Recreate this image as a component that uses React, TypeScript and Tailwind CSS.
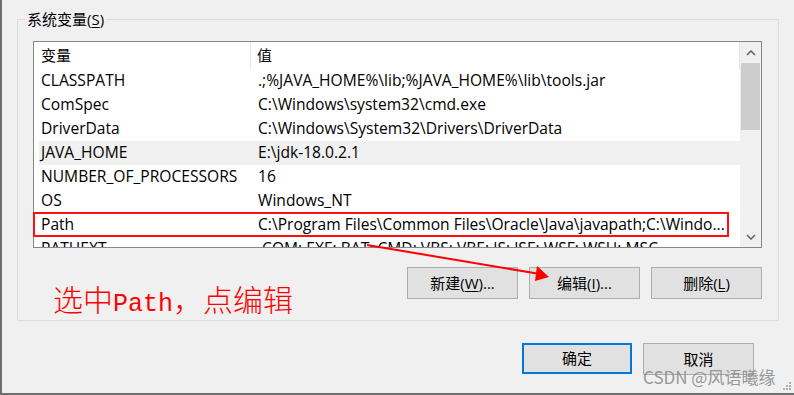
const rows: { name: string; value: string; hover?: boolean }[] = [
  { name: "CLASSPATH", value: ".;%JAVA_HOME%\\lib;%JAVA_HOME%\\lib\\tools.jar" },
  { name: "ComSpec", value: "C:\\Windows\\system32\\cmd.exe" },
  { name: "DriverData", value: "C:\\Windows\\System32\\Drivers\\DriverData" },
  { name: "JAVA_HOME", value: "E:\\jdk-18.0.2.1", hover: true },
  { name: "NUMBER_OF_PROCESSORS", value: "16" },
  { name: "OS", value: "Windows_NT" },
  { name: "Path", value: "C:\\Program Files\\Common Files\\Oracle\\Java\\javapath;C:\\Windo..." },
  { name: "PATHEXT", value: ".COM;.EXE;.BAT;.CMD;.VBS;.VBE;.JS;.JSE;.WSF;.WSH;.MSC" },
];

const ui = "font-['Segoe_UI','Open_Sans','Noto_Sans_CJK_SC',sans-serif]";

function WinButton({ children, primary }: { children: React.ReactNode; primary?: boolean }) {
  return (
    <div
      className={
        "flex items-center justify-center bg-[#e1e1e1] text-[15px] text-black " +
        (primary ? "h-[31px] w-[110px] border-2 border-[#0078d7]" : "h-[32px] w-[111px] border border-[#adadad]")
      }
    >
      {children}
    </div>
  );
}

function ScrollBar() {
  return (
    <div className="flex w-[21px] flex-col bg-[#f0f0f0]">
      <div className="flex h-[21px] items-center justify-center">
        <svg viewBox="0 0 10 6" className="h-[6px] w-[10px]">
          <path d="M1 5l4-4 4 4" stroke="#606060" strokeWidth="1.5" fill="none" />
        </svg>
      </div>
      <div className="mx-[1px] h-[67px] bg-[#cdcdcd]" />
      <div className="flex-1" />
      <div className="flex h-[21px] items-center justify-center">
        <svg viewBox="0 0 10 6" className="h-[6px] w-[10px]">
          <path d="M1 1l4 4 4-4" stroke="#606060" strokeWidth="1.5" fill="none" />
        </svg>
      </div>
    </div>
  );
}

export default function App() {
  return (
    <div className={"relative h-[395px] w-[794px] overflow-hidden border-b-2 border-l-2 border-[#6e6e6e] bg-[#f0f0f0] " + ui}>
      {/* 系统变量 group */}
      <div className="relative ml-[15px] mt-[19px] h-[302px] w-[762px] border border-[#dcdcdc] pl-[15px] pt-[21px]">
        <div className="absolute left-[7px] top-[-11px] bg-[#f0f0f0] px-[2px] text-[15px] leading-[20px] text-black">
          系统变量(<span className="underline underline-offset-2">S</span>)
        </div>

        <div className="flex h-[207px] w-[729px] border border-[#828790] bg-white">
          <div className="flex-1 overflow-hidden">
            <div className="flex h-[27px] items-center border-r border-[#e5e5e5] text-[15px] text-black">
              <div className="h-full w-[217px] border-r border-[#e5e5e5] pl-[7px] leading-[27px]">变量</div>
              <div className="pl-[6px]">值</div>
            </div>
            {rows.map((r) => (
              <div
                key={r.name}
                className={
                  "ml-[5px] flex h-[24px] items-center whitespace-nowrap text-[15.6px] text-black " +
                  (r.hover ? "bg-[#f0f0f0]" : "")
                }
              >
                <div className="w-[219px] pl-[2px]">{r.name}</div>
                <div>{r.value}</div>
              </div>
            ))}
          </div>
          <ScrollBar />
        </div>

        <div className="mt-[19px] flex w-[729px] justify-end gap-[11px]">
          <WinButton>
            新建(<span className="underline underline-offset-2">W</span>)...
          </WinButton>
          <WinButton>
            编辑(<span className="underline underline-offset-2">I</span>)...
          </WinButton>
          <WinButton>
            删除(<span className="underline underline-offset-2">L</span>)
          </WinButton>
        </div>
      </div>

      <div className="mt-[22px] flex justify-end gap-[11px] pr-[40px]">
        <WinButton primary>确定</WinButton>
        <WinButton>取消</WinButton>
      </div>

      {/* annotations */}
      <div className="absolute left-[31px] top-[212px] h-[25px] w-[696px] border-2 border-[#ff1010]" />
      <div className="absolute left-[51px] top-[280px] flex items-baseline font-['Noto_Sans_CJK_SC',sans-serif] text-[30px] font-light leading-[36px] text-[#ff0000]">
        选中<span className="font-['Liberation_Mono',monospace] text-[25px] font-normal">Path</span>，点编辑
      </div>
      <svg className="absolute left-0 top-0" width="794" height="395" viewBox="0 0 794 395">
        <line x1="365" y1="245" x2="538" y2="274" stroke="#ff0000" strokeWidth="2" />
        <polygon points="547,277 535,266 533,281" fill="#ff0000" />
      </svg>

      <div className="absolute left-[641px] top-[365px] font-['Noto_Sans_CJK_SC',sans-serif] text-[17px] leading-[24px] text-[#8c8c8c]/90">
        CSDN @风语曦缘
      </div>
      <div className="absolute bottom-[3px] right-[3px] grid grid-cols-3 gap-[1px]">
        <span />
        <span />
        <span className="h-[2px] w-[2px] bg-[#b0b0b0]" />
        <span />
        <span className="h-[2px] w-[2px] bg-[#b0b0b0]" />
        <span className="h-[2px] w-[2px] bg-[#b0b0b0]" />
        <span className="h-[2px] w-[2px] bg-[#b0b0b0]" />
        <span className="h-[2px] w-[2px] bg-[#b0b0b0]" />
        <span className="h-[2px] w-[2px] bg-[#b0b0b0]" />
      </div>
    </div>
  );
}
